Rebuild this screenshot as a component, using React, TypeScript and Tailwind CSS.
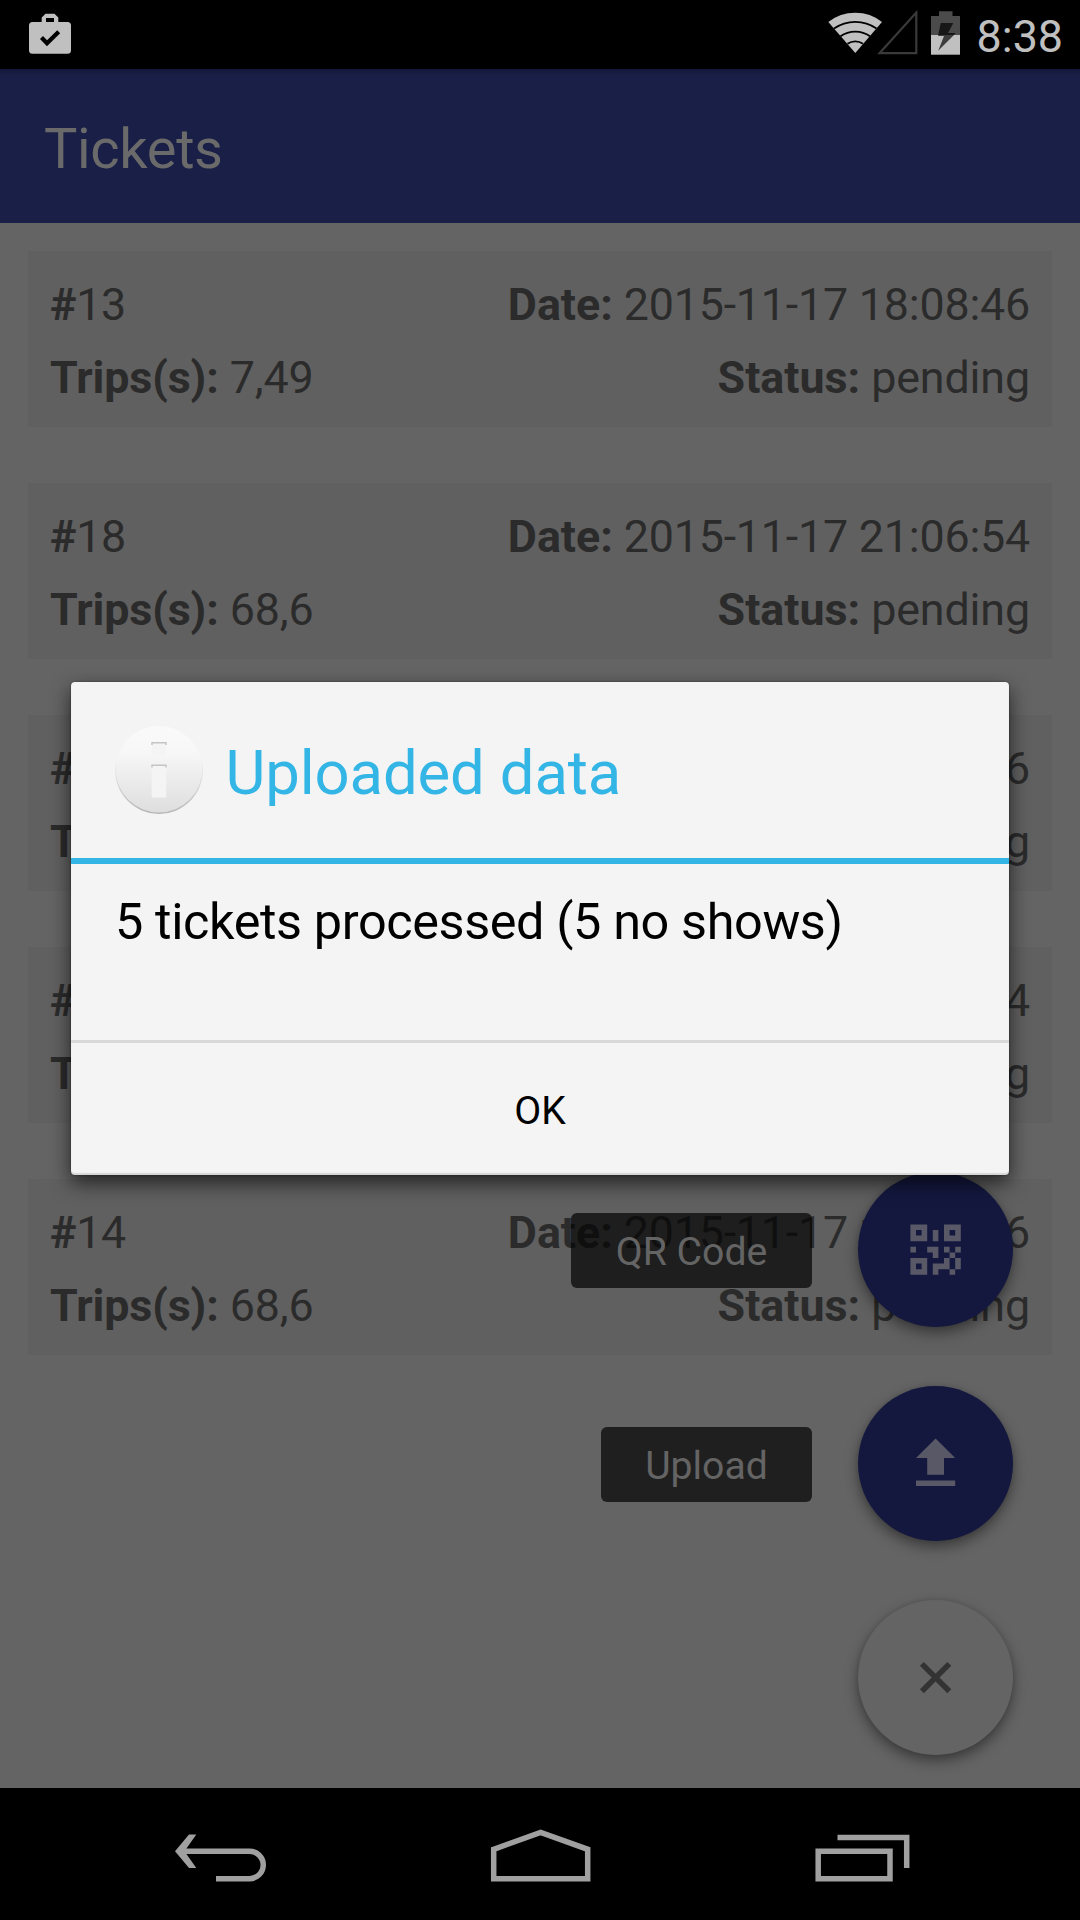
import React from "react";

type Ticket = { id: string; date: string; trips: string; status: string };

const tickets: Ticket[] = [
  { id: "13", date: "2015-11-17 18:08:46", trips: "7,49", status: "pending" },
  { id: "18", date: "2015-11-17 21:06:54", trips: "68,6", status: "pending" },
  { id: "15", date: "2015-11-17 18:10:36", trips: "68,6", status: "pending" },
  { id: "16", date: "2015-11-17 18:12:24", trips: "68,6", status: "pending" },
  { id: "14", date: "2015-11-17 18:09:26", trips: "68,6", status: "pending" },
];

function StatusBar() {
  return (
    <div className="flex h-[69px] shrink-0 items-start bg-black text-[#c0c0c0]">
      <svg className="mt-3 ml-7 h-[44px] w-[44px]" viewBox="28 12 44 44">
        <path
          fill="#c0c0c0"
          fillRule="evenodd"
          d="M45.500 13.700H54.500L58.300 17.500V22H67.500Q71 22 71 25.500V50.200Q71 53.700 67.500 53.700H32.500Q29 53.700 29 50.200V25.500Q29 22 32.500 22H41.700V17.500ZM46 18V22H54V18Z"
        />
        <path d="M41.500 37.500L47 43.200L58.700 31.700" fill="none" stroke="#000" strokeWidth="4.200" />
      </svg>
      <svg className="mt-2 ml-auto h-[50px] w-[136px]" viewBox="826 8 136 50">
        <path d="M828.300 22Q840 12.700 855.300 12.700T882 22L855.300 53Z" fill="#c0c0c0" />
        <g fill="none" stroke="#000" strokeWidth="1.800">
          <path d="M834 28.500Q843.500 21.800 855.300 21.800T876.500 28.500" />
          <path d="M840.500 36.300Q847 31.600 855.300 31.600T870 36.300" />
          <path d="M847.500 43.800Q851 41.300 855.300 41.300T863 43.800" />
        </g>
        <path d="M879.500 53.200L916.300 12.500V53.200Z" fill="none" stroke="#3a3a3a" strokeWidth="2.200" />
        <path d="M931 35V16H939V11.300H952.500V16H960V35Z" fill="#4b4b4b" />
        <path d="M931 35H960V54.700H931Z" fill="#c0c0c0" />
        <path d="M940.800 23H953.300L948 33H955.500L954 35H938.200Z" fill="#171717" />
        <path d="M938.200 35H954L938.200 50.700L944 36H938.200Z" fill="#3d3d3d" />
      </svg>
      <span className="mt-[10px] mr-[17px] ml-[15px] text-[44.8px] leading-[53px]">8:38</span>
    </div>
  );
}

function TicketCard({ t }: { t: Ticket }) {
  return (
    <div className="h-[176px] bg-[#606060] px-[22px] pt-[17px] text-[44.8px] leading-[73px] tracking-[-0.12px] text-[#2b2b2b]">
      <div className="flex justify-between">
        <span className="tracking-[-0.3px]">
          <b>#</b>
          {t.id}
        </span>
        <span className="tracking-[-0.2px]">
          <b className="tracking-normal">Date:</b> {t.date}
        </span>
      </div>
      <div className="flex justify-between">
        <span>
          <b>Trips(s):</b> {t.trips}
        </span>
        <span>
          <b className="tracking-normal">Status:</b> {t.status}
        </span>
      </div>
    </div>
  );
}

function FabLabel({ className, children }: { className: string; children: React.ReactNode }) {
  return (
    <span
      className={
        "mt-[2px] mr-[46px] flex h-[75px] items-center justify-center rounded-[6px] bg-[rgba(5,5,5,0.73)] pt-[3px] text-[39.2px] leading-[46px] text-[#646464] " +
        className
      }
    >
      {children}
    </span>
  );
}

function Fab({ className, children }: { className: string; children: React.ReactNode }) {
  return (
    <span
      className={
        "flex size-[155px] items-center justify-center rounded-full shadow-[0_6px_14px_rgba(0,0,0,0.42),0_0_4px_rgba(0,0,0,0.1)] " +
        className
      }
    >
      <svg className="size-[67.2px]" viewBox="0 0 24 24">
        {children}
      </svg>
    </span>
  );
}

function FabMenu() {
  return (
    <div className="absolute top-[1172px] right-[67px] flex flex-col items-end gap-[59px]">
      <div className="flex items-center">
        <FabLabel className="w-[241px]">QR Code</FabLabel>
        <Fab className="bg-[#14183f]">
          <path
            fill="#585866"
            d="M3,11H5V13H3V11M11,5H13V9H11V5M9,11H13V15H11V13H9V11M15,11H17V13H19V11H21V13H19V15H21V19H19V21H17V19H13V21H11V17H15V15H17V13H15V11M19,19V15H17V19H19M15,3H21V9H15V3M17,5V7H19V5H17M3,3H9V9H3V3M5,5V7H7V5H5M3,15H9V21H3V15M5,17V19H7V17H5Z"
          />
        </Fab>
      </div>
      <div className="flex items-center">
        <FabLabel className="w-[211px]">Upload</FabLabel>
        <Fab className="bg-[#14183f]">
          <path fill="#585866" d="M9 16h6v-6h4l-7-7-7 7h4zM5 18h14v2H5z" />
        </Fab>
      </div>
      <Fab className="bg-[#646464]">
        <path d="M7.100 7.100L16.900 16.900M16.900 7.100L7.100 16.900" stroke="#333" strokeWidth="2" />
      </Fab>
    </div>
  );
}

function InfoIcon() {
  return (
    <svg className="size-[90px]" viewBox="0 0 90 90">
      <defs>
        <linearGradient id="disc" x1="0" y1="0" x2="0" y2="1">
          <stop offset="0" stopColor="#fafafa" />
          <stop offset="0.300" stopColor="#f7f7f7" />
          <stop offset="1" stopColor="#dedede" />
        </linearGradient>
        <linearGradient id="rim" x1="0" y1="0" x2="0" y2="1">
          <stop offset="0.350" stopColor="#b5b5b5" stopOpacity="0" />
          <stop offset="1" stopColor="#b5b5b5" />
        </linearGradient>
      </defs>
      <circle cx="45" cy="45" r="44" fill="url(#rim)" />
      <circle cx="45" cy="44.200" r="43.300" fill="url(#disc)" />
      <rect x="37.700" y="17" width="14.500" height="13" rx="1.500" fill="#f4f4f4" />
      <rect x="37.700" y="39.500" width="14.500" height="33" rx="1.500" fill="#f4f4f4" />
      <path d="M38 20V17.800H52V20M38 42.500V40.300H52V42.500" fill="none" stroke="#c4c4c4" strokeWidth="1.500" />
    </svg>
  );
}

function Dialog() {
  return (
    <div className="absolute top-[682px] left-[71px] flex h-[493px] w-[938px] flex-col rounded-[4px] bg-[#f4f4f4] shadow-[inset_0_-2px_1px_rgba(0,0,0,0.12),0_0_2px_rgba(0,0,0,0.45),0_8px_20px_rgba(0,0,0,0.65)]">
      <div className="flex h-[176px] items-center pl-[43px]">
        <InfoIcon />
        <span className="ml-[21.5px] pt-[6px] text-[61.6px] leading-[72px] tracking-[-0.14px] text-[#33b5e5]">
          Uploaded data
        </span>
      </div>
      <div className="h-[6px] bg-[#33b5e5]" />
      <p className="h-[176px] px-[44px] pt-[28px] text-[50.4px] leading-[59px] tracking-[-0.39px] text-black">
        5 tickets processed (5 no shows)
      </p>
      <div className="h-[3px] bg-[#d9d9d9]" />
      <button className="flex-1 pt-[3px] text-[39.2px] leading-[46px] text-black">OK</button>
    </div>
  );
}

function NavBar() {
  return (
    <div className="flex h-[132px] shrink-0 items-center bg-black">
      <svg className="ml-[170px] h-[60px] w-[100px]" viewBox="170 1824 100 60" fill="none" stroke="#a0a0a0" strokeWidth="5.500">
        <path d="M180 1851.200H249.500A13.750 13.750 0 0 1 249.500 1878.700H216" />
        <path d="M189 1834.500H196.300L184.500 1851.200L196.300 1868H189L175 1851.200Z" fill="#a0a0a0" stroke="none" />
      </svg>
      <svg className="ml-[220px] h-[60px] w-[102px]" viewBox="490 1824 102 60" fill="none" stroke="#a0a0a0" strokeWidth="5.500">
        <path d="M493.700 1849.300L540.600 1832.300L587.700 1849.300V1878.700H493.700Z" />
      </svg>
      <svg className="ml-[218px] h-[60px] w-[110px]" viewBox="810 1824 110 60" fill="none" stroke="#a0a0a0" strokeWidth="5.500">
        <path d="M818.200 1851.200H890V1878.700H818.200ZM837.500 1837.500H906.700V1868" />
      </svg>
    </div>
  );
}

export default function App() {
  return (
    <div className="relative flex h-[1920px] w-[1080px] flex-col overflow-hidden bg-[#646464] font-['Roboto',sans-serif]">
      <StatusBar />
      <header className="flex h-[154px] shrink-0 items-center bg-[linear-gradient(to_bottom,#12173a_0px,#191f46_6px)] pt-[6px] pl-[44px] text-[56px] leading-[66px] tracking-[-0.35px] text-[#6a6a6a]">
        Tickets
      </header>
      <main className="flex flex-1 flex-col gap-[56px] px-7 pt-7">
        {tickets.map((t) => (
          <TicketCard key={t.id} t={t} />
        ))}
      </main>
      <NavBar />
      <FabMenu />
      <Dialog />
    </div>
  );
}
